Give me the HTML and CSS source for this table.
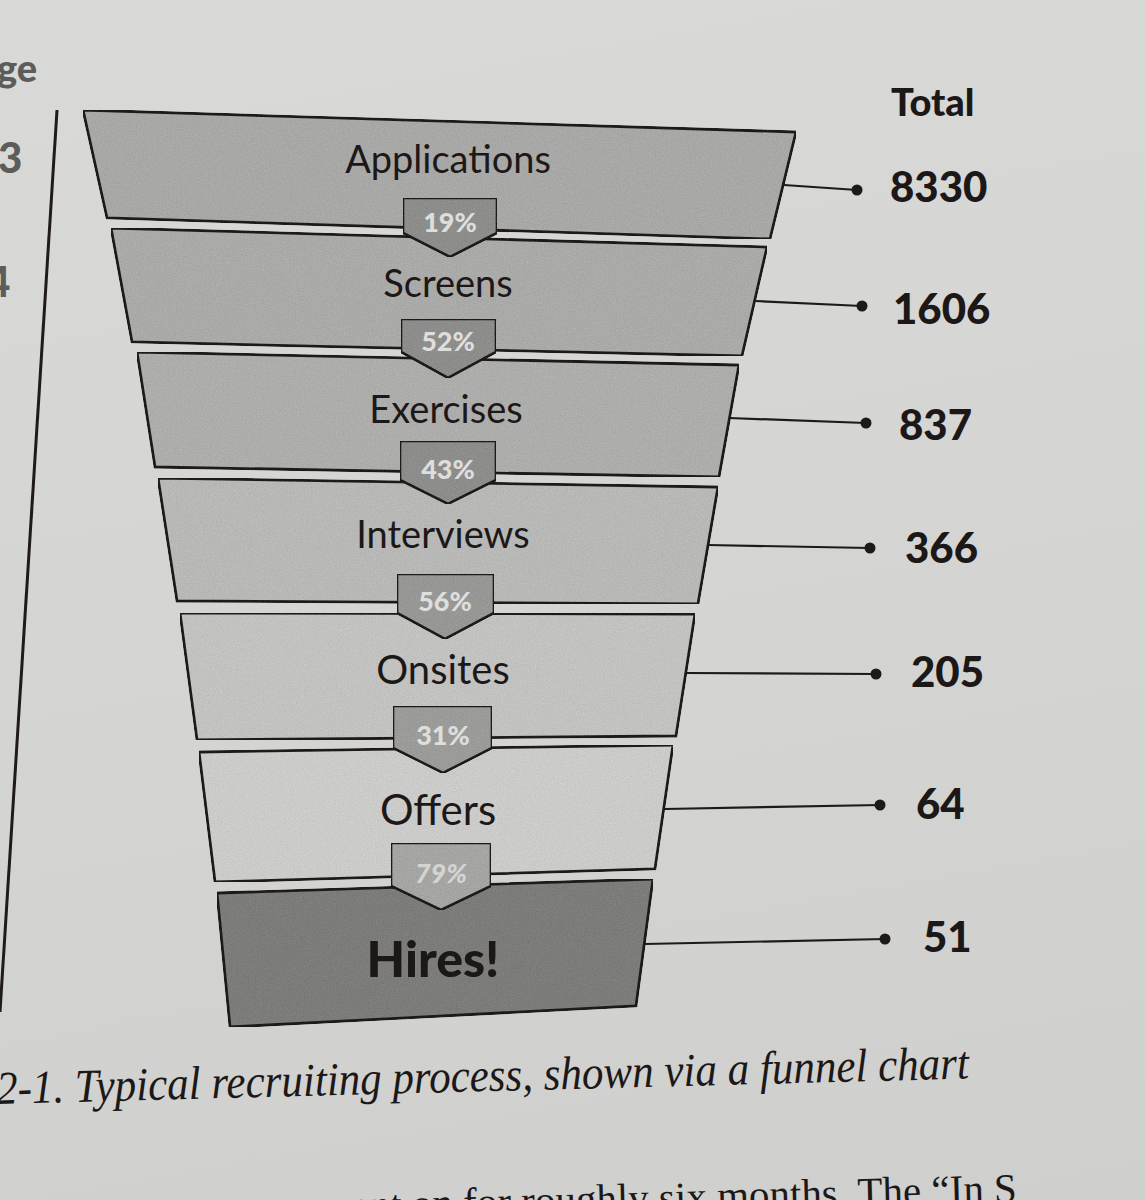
FILE: index.html
```html
<!DOCTYPE html>
<html lang="en">
<head>
<meta charset="utf-8">
<title>Typical recruiting process funnel chart</title>
<link rel="stylesheet" href="styles.css">
</head>
<body>
<div class="page">
  <svg class="chart" width="1145" height="1050" viewBox="0 0 1145 1050" xmlns="http://www.w3.org/2000/svg">
    <defs>
      <filter id="grain" x="0" y="0" width="100%" height="100%" color-interpolation-filters="sRGB">
        <feTurbulence type="fractalNoise" baseFrequency="0.85" numOctaves="2" seed="7" result="noise"/>
        <feColorMatrix in="noise" type="matrix"
          values="0.33 0.33 0.33 0 0  0.33 0.33 0.33 0 0  0.33 0.33 0.33 0 0  0 0 0 0 1" result="gray"/>
        <feComposite in="SourceGraphic" in2="gray" operator="arithmetic" k1="0" k2="1" k3="0.2" k4="-0.1" result="mix"/>
        <feComposite in="mix" in2="SourceGraphic" operator="in"/>
      </filter>
    </defs>

    <!-- margin remnants of the neighbouring table -->
    <text class="margin-txt" x="-3" y="82">ge</text>
    <text class="margin-num" x="-2" y="173">3</text>
    <text class="margin-num" x="-14" y="297">4</text>
    <line class="rule" x1="57" y1="110" x2="0" y2="1012"/>

    <!-- funnel stages -->
    <polygon class="stage s1" points="83,110 796,132 770,239 107,218"/>
    <polygon class="stage s2" points="111,228 767,247 742,356 132,342"/>
    <polygon class="stage s3" points="137,352 739,365 719,477 155,467"/>
    <polygon class="stage s4" points="158,478 718,487 698,604 177,601"/>
    <polygon class="stage s5" points="180,613 695,614 676,736 197,740"/>
    <polygon class="stage s6" points="199,752 673,745 655,869 215,882"/>
    <polygon class="stage s7" points="217,893 653,879 636,1006 230,1027"/>

    <!-- stage labels -->
    <text class="label" x="448" y="173">Applications</text>
    <text class="label" x="448" y="297">Screens</text>
    <text class="label" x="446" y="423">Exercises</text>
    <text class="label" x="443" y="548">Interviews</text>
    <text class="label l5" x="443" y="684">Onsites</text>
    <text class="label l6" x="438" y="825">Offers</text>
    <text class="label hires" x="433" y="977">Hires!</text>

    <!-- conversion badges -->
    <polygon class="badge b1" points="403,198 497,198 497,233 450,257 403,233"/>
    <text class="pct" x="450" y="232">19%</text>
    <polygon class="badge b2" points="401,319 496,319 496,352 448,378 401,352"/>
    <text class="pct" x="448" y="351">52%</text>
    <polygon class="badge b3" points="400,441 496,441 496,480 448,504 400,480"/>
    <text class="pct" x="448" y="479">43%</text>
    <polygon class="badge b4" points="397,574 494,574 494,613 445,639 397,613"/>
    <text class="pct" x="445" y="611">56%</text>
    <polygon class="badge b5" points="393,706 492,706 492,748 443,773 393,748"/>
    <text class="pct" x="443" y="745">31%</text>
    <polygon class="badge b6" points="391,843 491,843 491,886 441,910 391,886"/>
    <text class="pct faded" x="441" y="883">79%</text>

    <!-- leaders and totals -->
    <text class="total-head" x="891" y="116">Total</text>

    <line class="leader" x1="784" y1="185" x2="857" y2="190"/>
    <circle class="dot" cx="857" cy="190" r="5.5"/>
    <text class="total" x="890" y="202">8330</text>

    <line class="leader" x1="756" y1="301" x2="862" y2="306"/>
    <circle class="dot" cx="862" cy="306" r="5.5"/>
    <text class="total" x="893" y="324">1606</text>

    <line class="leader" x1="729" y1="418" x2="866" y2="423"/>
    <circle class="dot" cx="866" cy="423" r="5.5"/>
    <text class="total" x="899" y="440">837</text>

    <line class="leader" x1="708" y1="545" x2="870" y2="548"/>
    <circle class="dot" cx="870" cy="548" r="5.5"/>
    <text class="total" x="905" y="563">366</text>

    <line class="leader" x1="687" y1="673" x2="876" y2="674"/>
    <circle class="dot" cx="876" cy="674" r="5.5"/>
    <text class="total" x="911" y="687">205</text>

    <line class="leader" x1="665" y1="809" x2="880" y2="805"/>
    <circle class="dot" cx="880" cy="805" r="5.5"/>
    <text class="total" x="916" y="819">64</text>

    <line class="leader" x1="645" y1="944" x2="885" y2="939"/>
    <circle class="dot" cx="885" cy="939" r="5.5"/>
    <text class="total" x="923" y="952">51</text>
  </svg>

  <p class="caption">2-1. Typical recruiting process, shown via a funnel chart</p>
  <p class="body-text">went on for roughly six months. The “In S</p>
</div>
</body>
</html>
```

FILE: styles.css
```css
html, body {
  margin: 0;
  padding: 0;
  background: #d3d3d1;
}

.page {
  width: 1145px;
  height: 1200px;
  overflow: hidden;
  background: linear-gradient(170deg, #d9d9d7 0%, #d5d5d3 45%, #cfcfcd 100%);
}

.chart {
  display: block;
}

.rule {
  stroke: #201a1a;
  stroke-width: 3;
}

.margin-txt,
.margin-num {
  font-family: "Lato", "DejaVu Sans", sans-serif;
  font-weight: 900;
  fill: #5c5c5a;
}

.margin-txt {
  font-size: 38px;
}

.margin-num {
  font-size: 42px;
}

.stage {
  stroke: #1f1a1a;
  stroke-width: 2.8;
  stroke-linejoin: miter;
  filter: url(#grain);
}

.s1 { fill: #a8a8a6; }
.s2 { fill: #aaaaa8; }
.s3 { fill: #adadab; }
.s4 { fill: #b8b8b6; }
.s5 { fill: #c2c2c0; }
.s6 { fill: #cbcbc9; }
.s7 { fill: #7c7c7a; }

.label {
  font-family: "Lato", "Liberation Sans", sans-serif;
  font-weight: 400;
  font-size: 38px;
  fill: #1d1818;
  text-anchor: middle;
}

.l5 { font-size: 40px; }
.l6 { font-size: 42px; }

.label.hires {
  font-weight: 900;
  font-size: 50px;
}

.badge {
  stroke: #1f1a1a;
  stroke-width: 2.6;
  stroke-linejoin: miter;
  filter: url(#grain);
}

.b1, .b2, .b3 { fill: #8d8d8b; }
.b4 { fill: #979795; }
.b5 { fill: #9b9b99; }
.b6 { fill: #a5a5a3; }

.pct {
  font-family: "Lato", "Liberation Sans", sans-serif;
  font-weight: 900;
  font-size: 27px;
  fill: #dededc;
  text-anchor: middle;
}

.pct.faded {
  fill: #d4d4d2;
  font-style: italic;
}

.leader {
  stroke: #1f1a1a;
  stroke-width: 2.2;
}

.dot {
  fill: #1f1a1a;
}

.total,
.total-head {
  font-family: "Lato", "DejaVu Sans", sans-serif;
  font-weight: 900;
  fill: #1c1818;
}

.total {
  font-size: 42px;
}

.total-head {
  font-size: 38px;
}

.caption {
  margin: 8px 0 0 -4px;
  font-family: "Liberation Serif", "DejaVu Serif", serif;
  font-style: italic;
  font-size: 47px;
  line-height: 60px;
  color: #1c1818;
  white-space: nowrap;
  transform-origin: 0 50%;
  transform: rotate(-1.5deg) scaleX(0.915);
}

.body-text {
  margin: 58px 0 0 322px;
  font-family: "Liberation Serif", "DejaVu Serif", serif;
  font-size: 41px;
  line-height: 60px;
  color: #1c1818;
  white-space: nowrap;
  transform-origin: 0 50%;
  transform: rotate(-1.5deg);
}
```
